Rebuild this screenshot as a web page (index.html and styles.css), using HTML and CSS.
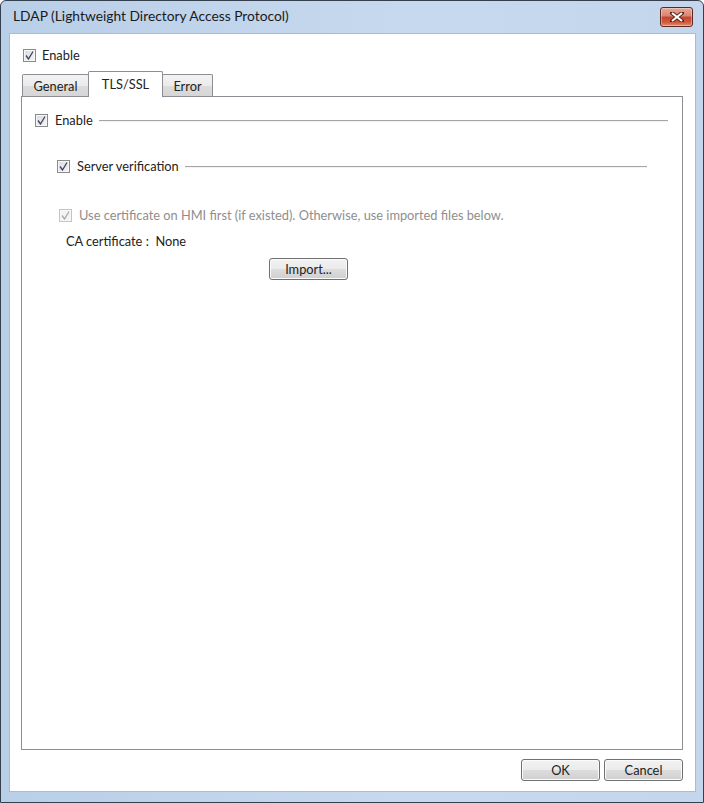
FILE: index.html
```html
<!DOCTYPE html>
<html lang="en">

<head>
    <meta charset="UTF-8">
    <meta name="viewport" content="width=device-width, initial-scale=1.0">
    <title>LDAP</title>
    <link rel="stylesheet" href="styles.css">
</head>

<body>
    <div class="window">
        <div class="titlebar">
            <span class="title">LDAP (Lightweight Directory Access Protocol)</span>
            <button class="close-btn">
                <svg width="14" height="10" viewBox="0 0 14 10">
                    <path d="M2 1 L12 9 M12 1 L2 9" stroke="#5a2418" stroke-width="4" stroke-linecap="square" fill="none" />
                    <path d="M2 1 L12 9 M12 1 L2 9" stroke="#fff" stroke-width="2.2" fill="none" />
                </svg>
            </button>
        </div>

        <div class="client">
            <label class="check-row top-enable">
                <span class="check"><svg width="9" height="9" viewBox="0 0 9 9"><path d="M1 4.5 L3.5 8 L8 0.5" stroke="#3a4660" stroke-width="1.3" fill="none" /></svg></span>
                Enable
            </label>

            <div class="tabs">
                <div class="tab">General</div>
                <div class="tab active">TLS/SSL</div>
                <div class="tab">Error</div>
            </div>

            <div class="panel">
                <div class="group-row">
                    <span class="check"><svg width="9" height="9" viewBox="0 0 9 9"><path d="M1 4.5 L3.5 8 L8 0.5" stroke="#3a4660" stroke-width="1.3" fill="none" /></svg></span>
                    <span class="label">Enable</span>
                    <span class="rule"></span>
                </div>

                <div class="group-row server-row">
                    <span class="check"><svg width="9" height="9" viewBox="0 0 9 9"><path d="M1 4.5 L3.5 8 L8 0.5" stroke="#3a4660" stroke-width="1.3" fill="none" /></svg></span>
                    <span class="label">Server verification</span>
                    <span class="rule"></span>
                </div>

                <div class="group-row disabled-row">
                    <span class="check disabled"><svg width="9" height="9" viewBox="0 0 9 9"><path d="M1 4.5 L3.5 8 L8 0.5" stroke="#a8a8a8" stroke-width="1.3" fill="none" /></svg></span>
                    <span class="label">Use certificate on HMI first (if existed). Otherwise, use imported files below.</span>
                </div>

                <div class="ca-row">CA certificate :&nbsp; None</div>

                <div class="import-row">
                    <button class="btn">Import...</button>
                </div>
            </div>

            <div class="footer">
                <button class="btn">OK</button>
                <button class="btn">Cancel</button>
            </div>
        </div>
    </div>
</body>

</html>
```

FILE: styles.css
```css
*{
    margin: 0;
    padding: 0;
    box-sizing: border-box;
}
body{
    font-family: Lato, "Open Sans", sans-serif;
    font-size: 12.8px;
    color: #222;
    background-color: #fff;
}
.window{
    width: 704px;
    height: 803px;
    border: 1px solid #34404e;
    border-radius: 6px 6px 0 0;
    background: linear-gradient(90deg, #b9cfe8 0%, #c7d9ee 60%, #c3d6ec 100%);
    display: flex;
    flex-direction: column;
}
.titlebar{
    height: 32px;
    display: flex;
    align-items: center;
    justify-content: space-between;
    padding: 0 10px 3px 12px;
}
.title{
    font-size: 13.8px;
    color: #1a1a1a;
}
.close-btn{
    width: 33px;
    height: 20px;
    margin-top: 3px;
    border: 1px solid #5c2a22;
    border-radius: 3px;
    background: linear-gradient(180deg, #e9a795 0%, #d88571 45%, #c3452c 50%, #cf5c40 80%, #e58c6e 100%);
    box-shadow: inset 0 0 0 1px rgba(255, 255, 255, 0.35);
    display: flex;
    align-items: center;
    justify-content: center;
}
.client{
    flex: 1;
    margin: 0 7px 10px 8px;
    background-color: #fff;
    border: 1px solid #a9bcd3;
    display: flex;
    flex-direction: column;
    padding: 0 12px 0 11px;
}
.check{
    width: 13px;
    height: 13px;
    border: 1px solid #8a8a8a;
    background: linear-gradient(135deg, #dcdcdc 0%, #f4f4f4 100%);
    box-shadow: inset 0 0 0 1px #f7f7f7;
    display: flex;
    align-items: center;
    justify-content: center;
    flex-shrink: 0;
}
.check.disabled{
    border-color: #c4c4c4;
    background: #f4f4f4;
}
.check-row{
    display: flex;
    align-items: center;
    gap: 6px;
    height: 16px;
}
.top-enable{
    margin-top: 13px;
    margin-left: 2px;
}
.tabs{
    display: flex;
    align-items: flex-end;
    margin-top: 8px;
    margin-left: 1px;
    height: 25px;
    position: relative;
    z-index: 1;
}
.tab{
    height: 22px;
    padding-top: 3px;
    text-align: center;
    border: 1px solid #8c8e94;
    border-bottom: none;
    border-radius: 2px 2px 0 0;
    background: linear-gradient(180deg, #f3f3f3 0%, #ebebeb 50%, #dcdcdc 51%, #d6d6d6 100%);
    width: 67px;
}
.tab + .tab{
    margin-left: -1px;
}
.tab.active{
    height: 26px;
    margin-bottom: -1px;
    width: 75px;
    background: #fff;
    padding-top: 4px;
}
.tab:last-child{
    width: 51px;
}
.panel{
    flex: 1;
    border: 1px solid #8c8e94;
    display: flex;
    flex-direction: column;
    padding: 15px 14px 0 13px;
}
.group-row{
    display: flex;
    align-items: center;
    height: 16px;
}
.group-row .label{
    margin-left: 7px;
    white-space: nowrap;
}
.rule{
    flex: 1;
    height: 2px;
    border-top: 1px solid #a6a6a6;
    border-bottom: 1px solid #f2f2f2;
    margin-left: 6px;
    margin-top: 1px;
}
.server-row{
    margin-top: 30px;
    margin-left: 22px;
    margin-right: 21px;
}
.disabled-row{
    margin-top: 33px;
    margin-left: 24px;
    color: #8e8e8e;
}
.ca-row{
    margin-top: 10px;
    margin-left: 31px;
    height: 16px;
    line-height: 16px;
}
.import-row{
    margin-top: 9px;
    margin-left: 234px;
}
.btn{
    width: 79px;
    height: 22px;
    font-family: Lato, "Open Sans", sans-serif;
    font-size: 12.8px;
    color: #222;
    border: 1px solid #707070;
    border-radius: 3px;
    background: linear-gradient(180deg, #f2f2f2 0%, #ebebeb 48%, #dddddd 52%, #cfcfcf 100%);
    box-shadow: inset 0 0 0 1px #fbfbfb;
}
.footer{
    display: flex;
    justify-content: flex-end;
    gap: 4px;
    margin-top: 9px;
    margin-bottom: 10px;
}
```
